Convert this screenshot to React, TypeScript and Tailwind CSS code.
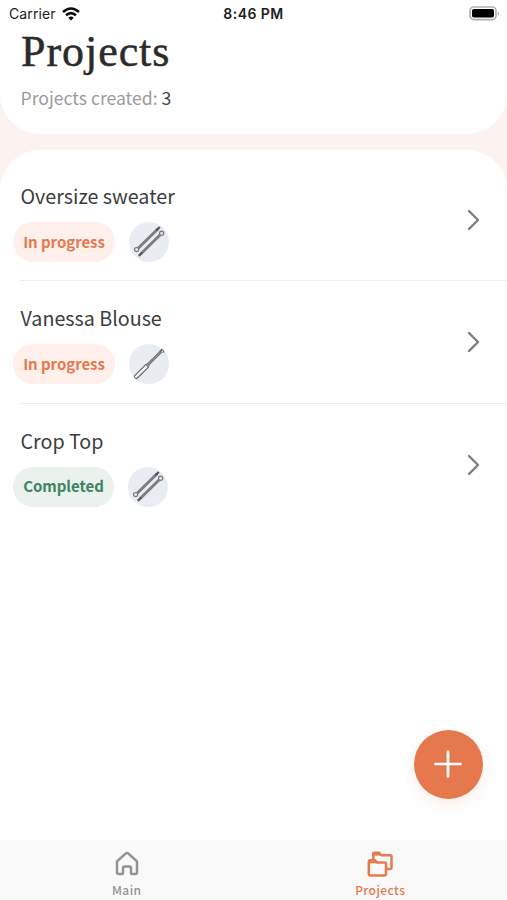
import React from "react";

const SANS = "font-['Noto_Sans_CJK_SC','Noto_Sans_CJK_JP','Noto_Sans',sans-serif]";

function NeedlesIcon() {
  return (
    <svg width="40" height="40" viewBox="0 0 40 40" fill="none" stroke="#74787b">
      <path d="M9.2 26.2L28.8 7" strokeWidth="3" stroke="#7a7e81" />
      <path d="M27.3 8.5L30.8 5" strokeWidth="2.4" stroke="#54585b" />
      <circle cx="7.6" cy="27.6" r="2.1" strokeWidth="1.2" fill="#e4e8ed" />
      <path d="M12.2 31.5L31 13" strokeWidth="3" stroke="#7a7e81" />
      <path d="M9.8 33.9L13.2 30.5" strokeWidth="2.4" stroke="#54585b" />
      <circle cx="32.6" cy="11.3" r="2.1" strokeWidth="1.2" fill="#e4e8ed" />
    </svg>
  );
}

function HookIcon() {
  return (
    <svg width="40" height="40" viewBox="0 0 40 40" fill="none" stroke="#66696c" strokeLinejoin="round">
      <path d="M5.3 32.1L16.5 20.8Q18.8 19.8 19.7 21.5L19.3 23.4L7.9 34.5Q6.9 35 6 34.1Q5 33.2 5.3 32.1Z" strokeWidth="1.2" fill="#f1f3f7" />
      <path d="M17.8 21.8L32.4 7.3" strokeWidth="3" stroke="#6e7275" />
      <path d="M18.5 21.1L31.6 8" strokeWidth="0.6" stroke="#b8bdc2" />
      <path d="M31 7.4L33 5.4L34.8 6.1L34.4 8.6" strokeWidth="1.5" />
      <circle cx="18.8" cy="21.2" r="1.1" strokeWidth="0.8" fill="#d3d7dc" />
    </svg>
  );
}

type Project = { name: string; status: "In progress" | "Completed"; tool: "needles" | "hook" };

const projects: Project[] = [
  { name: "Oversize sweater", status: "In progress", tool: "needles" },
  { name: "Vanessa Blouse", status: "In progress", tool: "hook" },
  { name: "Crop Top", status: "Completed", tool: "needles" },
];

function ProjectRow({ project, last }: { project: Project; last: boolean }) {
  const done = project.status === "Completed";
  return (
    <li className={`ml-5 flex h-[122.3px] items-start justify-between ${last ? "" : "border-b border-[#ececec]"}`}>
      <div>
        <h2 className="ml-[0.5px] mt-[19px] h-[36px] whitespace-nowrap text-[19.7px] leading-[36px] text-[#3b3d3e]">{project.name}</h2>
        <div className="-ml-[7px] mt-[8px] flex items-center gap-[14px]">
          <span
            className={`flex h-[40px] items-center justify-center whitespace-nowrap rounded-full text-[15px] font-bold tracking-[-0.05px] ${
              done ? "w-[101px] bg-[#ebf1ec] text-[#3d8463]" : "w-[102px] bg-[#fff0eb] text-[#e6794f]"
            }`}
          >
            {project.status}
          </span>
          <span className="h-[40px] w-[40px] overflow-hidden rounded-full bg-[#e9edf3]">
            {project.tool === "hook" ? <HookIcon /> : <NeedlesIcon />}
          </span>
        </div>
      </div>
      <svg className="mr-[26px] mt-[50px]" width="16" height="22" viewBox="0 0 16 22" fill="none" stroke="#7b7e80" strokeWidth="2.4" strokeLinecap="round" strokeLinejoin="round">
        <path d="M4 2L13 11L4 20" />
      </svg>
    </li>
  );
}

export default function App() {
  return (
    <div className={`relative flex h-[900px] w-[507px] flex-col overflow-hidden bg-[#fcf2ef] ${SANS}`}>
      <header className="h-[134px] rounded-b-[40px] bg-white">
        <div className="grid h-[28px] grid-cols-3 items-center font-['Inter',sans-serif] text-[14px] leading-[28px] text-[#1d1d1d]">
          <div className="flex items-center gap-[6px] pl-[9px]">
            <span className="tracking-[0.1px]">Carrier</span>
            <svg width="18" height="14" viewBox="0 0 18 14" fill="none" stroke="#0a0a0a" strokeWidth="2.6">
              <path d="M1 5Q9 -2 17 5" />
              <path d="M4 8.3Q9 4 14 8.3" />
              <path d="M6.3 10.8Q9 8.4 11.7 10.8L9 13.5Z" fill="#0a0a0a" stroke="none" />
            </svg>
          </div>
          <span className="text-center font-semibold tracking-[0.45px]">8:46 PM</span>
          <svg className="ml-auto mr-[6px] -mt-px" width="32" height="15" viewBox="0 0 32 15">
            <rect x="1" y="1" width="26" height="12.6" rx="3.8" fill="white" stroke="#b0b0b0" strokeWidth="1.6" />
            <rect x="3" y="3" width="22" height="8.6" rx="1.8" fill="#000" />
            <path d="M28.8 5Q31.3 7.3 28.8 9.6Z" fill="#aaa" />
          </svg>
        </div>
        <h1 className="ml-[21px] h-[46px] whitespace-nowrap font-['Liberation_Serif',serif] text-[44px] leading-[47px] tracking-[0.95px] text-[#2a2b2a] [-webkit-text-stroke:0.5px_#2a2b2a]">
          Projects
        </h1>
        <p className="ml-[20.5px] mt-[9px] h-[30px] whitespace-nowrap text-[17.6px] leading-[29px] text-[#999b9d]">
          Projects created: <span className="text-[#434547]">3</span>
        </p>
      </header>
      <main className="mt-4 flex-1 rounded-t-[40px] bg-white pt-[9px]">
        <ul>
          {projects.map((project, i) => (
            <ProjectRow key={project.name} project={project} last={i === projects.length - 1} />
          ))}
        </ul>
      </main>
      <button aria-label="Add project" className="absolute left-[414px] top-[730px] flex h-[69px] w-[69px] items-center justify-center rounded-full bg-[#e6784e] shadow-[0_6px_14px_rgba(230,120,78,0.13)]">
        <svg className="-ml-px -mt-px" width="30" height="30" viewBox="0 0 30 30" stroke="white" strokeWidth="2.7" strokeLinecap="round">
          <path d="M15 2.5V27.5M2.5 15H27.5" />
        </svg>
      </button>
      <nav className="grid h-[60px] grid-cols-2 bg-[#f9f9f9] text-[12px]">
        <a className="flex flex-col items-center pt-[9.5px] text-[#939393]">
          <svg width="28" height="28" viewBox="0 0 28 28" fill="none" stroke="currentColor" strokeWidth="2.5" strokeLinejoin="round">
            <path d="M4 11.4L12.7 3.5Q14 2.4 15.3 3.5L24 11.4V22.2Q24 24 22.2 24H19Q18 24 18 23V18.2Q18 16.5 16.3 16.5H11.7Q10 16.5 10 18.2V23Q10 24 9 24H5.8Q4 24 4 22.2Z" />
          </svg>
          <span className="mt-[4.5px] font-medium leading-[16px] tracking-[0.45px]">Main</span>
        </a>
        <a className="flex flex-col items-center pt-[9.5px] text-[#e6794f]">
          <svg width="28" height="28" viewBox="0 0 28 28" fill="none" stroke="currentColor" strokeWidth="2.5" strokeLinejoin="round">
            <path d="M7.3 9.5V3.8Q7.3 2.8 8.3 2.8H13.2L15.2 5.2H24.2Q25.5 5.2 25.5 6.5V17.6Q25.5 18.9 24.2 18.9H20.5" />
            <path d="M7.3 4.4H14" />
            <path d="M2.8 12.2V24.2Q2.8 25.4 4 25.4H18.8Q20 25.4 20 24.2V13.6Q20 12.4 18.8 12.4H10.8L8.8 10.2H4Q2.8 10.2 2.8 11.4Z" />
            <path d="M3 12.1H10.5" />
          </svg>
          <span className="mt-[4.5px] font-medium leading-[16px] tracking-[0.45px]">Projects</span>
        </a>
      </nav>
    </div>
  );
}
